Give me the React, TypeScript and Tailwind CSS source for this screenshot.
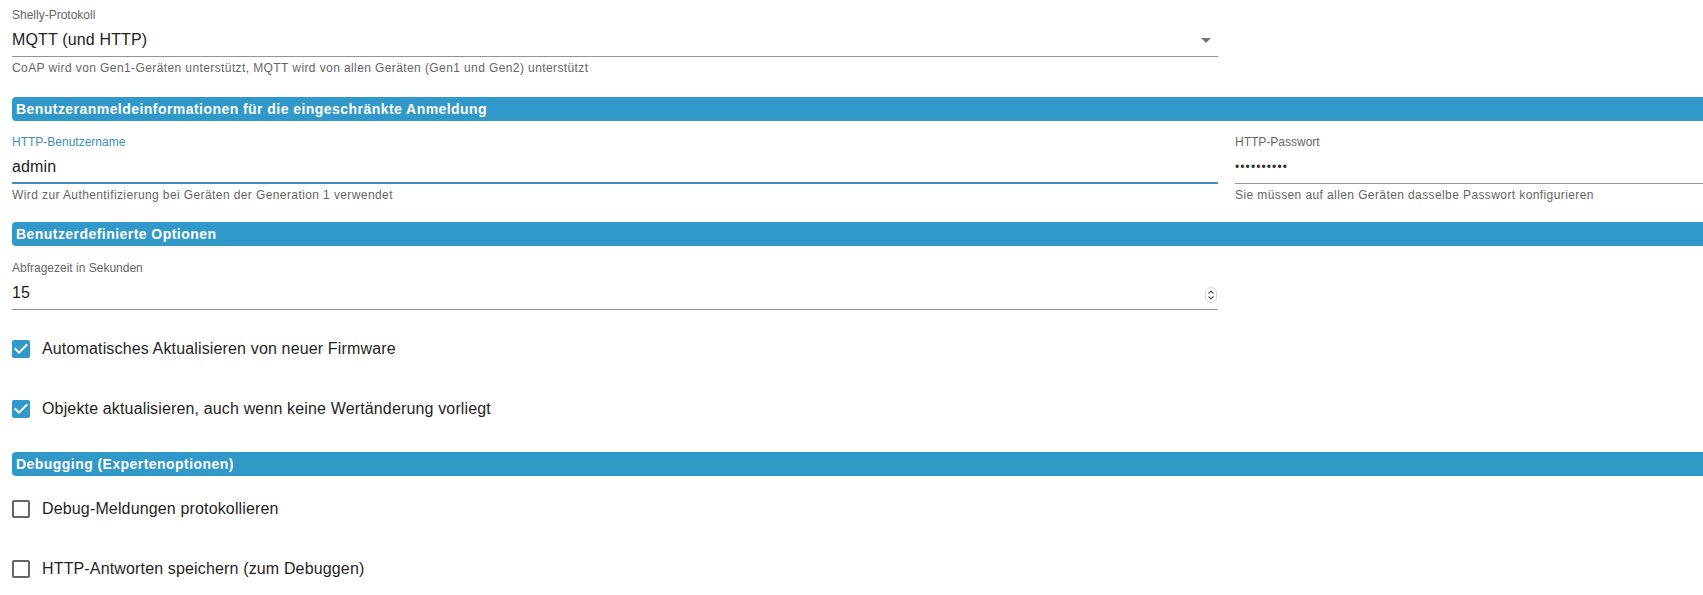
import React from "react";

function Label({ children, focused = false }: { children: React.ReactNode; focused?: boolean }) {
    return (
        <div className={`h-[14px] text-[12px] leading-[14px] ${focused ? "text-[#3b8fc0]" : "text-[#666666]"}`}>
            {children}
        </div>
    );
}

function Helper({ children }: { children: React.ReactNode }) {
    return (
        <div className="mt-[4px] h-[14px] whitespace-nowrap text-[12px] leading-[14px] tracking-[0.4px] text-[#666666]">
            {children}
        </div>
    );
}

function SectionBar({ title, className = "" }: { title: string; className?: string }) {
    return (
        <div className={`flex h-[24px] items-center rounded-l-[4px] bg-[#3198ca] pl-[4px] text-[14px] font-bold tracking-[0.45px] text-white ${className}`}>
            {title}
        </div>
    );
}

function ArrowDropDown() {
    return (
        <svg width="24" height="24" viewBox="0 0 24 24" className="shrink-0">
            <path d="M7 10l5 5 5-5z" fill="#757575" />
        </svg>
    );
}

function SpinButton() {
    return (
        <svg width="12" height="16" viewBox="0 0 12 16" className="mb-[2px] mr-[1px] shrink-0 self-end">
            <rect x="0.5" y="0.5" width="11" height="15" rx="5.5" fill="#ffffff" stroke="#d4d4d4" />
            <polyline points="3.5,6.5 6,4 8.5,6.5" fill="none" stroke="#555555" strokeWidth="1.2" />
            <polyline points="3.5,9.5 6,12 8.5,9.5" fill="none" stroke="#555555" strokeWidth="1.2" />
        </svg>
    );
}

function CheckBox({ checked, label, className = "" }: { checked: boolean; label: string; className?: string }) {
    return (
        <div className={`flex h-[42px] items-center gap-[12px] ${className}`}>
            <svg width="18" height="18" viewBox="3 3 18 18" className="shrink-0">
                {checked ? (
                    <path
                        d="M19 3H5c-1.11 0-2 .9-2 2v14c0 1.1.89 2 2 2h14c1.11 0 2-.9 2-2V5c0-1.1-.89-2-2-2zm-9 14l-5-5 1.41-1.41L10 14.17l7.59-7.59L19 8l-9 9z"
                        fill="#3198ca"
                    />
                ) : (
                    <path
                        d="M19 5v14H5V5h14m0-2H5c-1.1 0-2 .9-2 2v14c0 1.1.9 2 2 2h14c1.1 0 2-.9 2-2V5c0-1.1-.9-2-2-2z"
                        fill="#666666"
                    />
                )}
            </svg>
            <span className="text-[16px] tracking-[0.15px] text-[#1f1f1f]">{label}</span>
        </div>
    );
}

export default function App() {
    return (
        <div className="h-[595px] w-full overflow-hidden bg-white pl-[12px] pt-[8px] font-[family-name:'Liberation_Sans',Arial,sans-serif]">
            {/* Protokoll */}
            <div className="w-[1206px]">
                <Label>Shelly-Protokoll</Label>
                <div className="mt-[6px] border-b border-[#949494] pb-[4px]">
                    <div className="flex h-[24px] items-center justify-between text-[16px] leading-[24px] tracking-[0.15px] text-[#212121]">
                        <span>MQTT (und HTTP)</span>
                        <ArrowDropDown />
                    </div>
                </div>
                <Helper>CoAP wird von Gen1-Geräten unterstützt, MQTT wird von allen Geräten (Gen1 und Gen2) unterstützt</Helper>
            </div>

            <SectionBar className="mt-[22px]" title="Benutzeranmeldeinformationen für die eingeschränkte Anmeldung" />

            <div className="mt-[14px] flex gap-[17px]">
                <div className="w-[1206px] shrink-0">
                    <Label focused>HTTP-Benutzername</Label>
                    <div className="mt-[6px] border-b-2 border-[#3b8fc0] pb-[3px]">
                        <div className="flex h-[24px] items-center text-[16px] leading-[24px] tracking-[0.15px] text-[#212121]">
                            admin
                        </div>
                    </div>
                    <Helper>Wird zur Authentifizierung bei Geräten der Generation 1 verwendet</Helper>
                </div>
                <div className="min-w-0 flex-1">
                    <Label>HTTP-Passwort</Label>
                    <div className="mt-[6px] border-b border-[#949494] pb-[4px]">
                        <div className="h-[24px] text-[12px] leading-[24px] tracking-[1.1px] text-[#333333]">••••••••••</div>
                    </div>
                    <Helper>Sie müssen auf allen Geräten dasselbe Passwort konfigurieren</Helper>
                </div>
            </div>

            <SectionBar className="mt-[20px]" title="Benutzerdefinierte Optionen" />

            <div className="mt-[15px] w-[1206px]">
                <Label>Abfragezeit in Sekunden</Label>
                <div className="mt-[6px] border-b border-[#949494] pb-[4px]">
                    <div className="flex h-[24px] items-center justify-between text-[16px] leading-[24px] tracking-[0.15px] text-[#212121]">
                        <span>15</span>
                        <SpinButton />
                    </div>
                </div>
            </div>

            <CheckBox className="mt-[18px]" checked label="Automatisches Aktualisieren von neuer Firmware" />
            <CheckBox className="mt-[18px]" checked label="Objekte aktualisieren, auch wenn keine Wertänderung vorliegt" />

            <SectionBar className="mt-[22px]" title="Debugging (Expertenoptionen)" />

            <CheckBox className="mt-[12px]" checked={false} label="Debug-Meldungen protokollieren" />
            <CheckBox className="mt-[18px]" checked={false} label="HTTP-Antworten speichern (zum Debuggen)" />
        </div>
    );
}
